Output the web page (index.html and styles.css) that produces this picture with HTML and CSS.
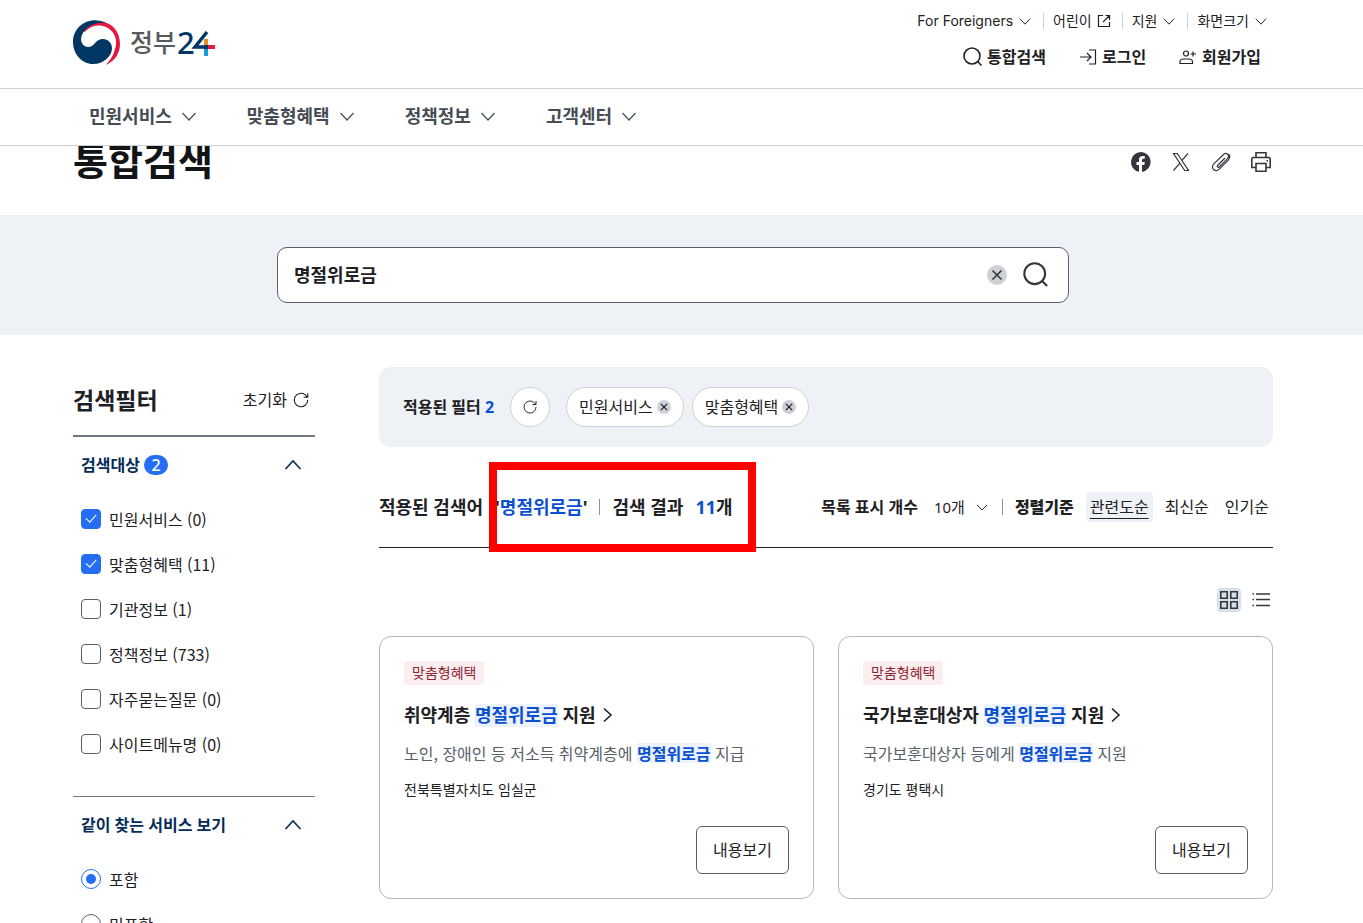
FILE: index.html
```html
<!DOCTYPE html>
<html lang="ko">
<head>
<meta charset="utf-8">
<title>통합검색 | 정부24</title>
<link rel="stylesheet" href="styles.css">
</head>
<body>
<svg class="sprite" aria-hidden="true">
  <symbol id="i-down" viewBox="0 0 20 20"><path d="M3.5 7l6.5 7L16.5 7"/></symbol>
  <symbol id="i-up" viewBox="0 0 20 20"><path d="M2.5 14L10 6l7.500 8"/></symbol>
  <symbol id="i-right" viewBox="0 0 20 20"><path d="M6 3.500l7 6.500-7 6.500"/></symbol>
  <symbol id="i-search" viewBox="0 0 20 20"><circle cx="9" cy="9" r="8"/><path d="M14.500 14.500l4 4"/></symbol>
  <symbol id="i-out" viewBox="0 0 16 16"><path d="M7 2.500H2.500v11h11V9M9.500 2.500h4V7M13.500 2.500L7 9"/></symbol>
  <symbol id="i-login" viewBox="0 0 20 20"><path d="M11 3h6.500v14H11M2 10h10.500M9 6l4 4-4 4"/></symbol>
  <symbol id="i-join" viewBox="0 0 20 20"><circle cx="8" cy="6.500" r="2.500"/><path d="M2 16.500v-1.500c0-2 1.500-3 3.500-3h5.500c2 0 3.500 1 3.500 3v1.500zM15 4.500v5M12.500 7h5.500"/></symbol>
  <symbol id="i-reset" viewBox="0 0 20 20"><path d="M17.500 10A7.500 7.500 0 1 1 14.500 4L17.200 6.700M17.500 2.500v4.500H13"/></symbol>
  <symbol id="i-close" viewBox="0 0 20 20"><circle cx="10" cy="10" r="10" fill="#cdd1d5" stroke="none"/><path d="M5.500 5.500l9 9M14.500 5.500l-9 9"/></symbol>
  <symbol id="i-facebook" viewBox="0 0 24 24"><path fill="currentColor" stroke="none" d="M12 2a10 10 0 0 0-2 19.800V15H7.500v-3H10V9.800C10 7.200 11.500 6 13.800 6c.8 0 1.500.1 2 .2v2.500h-1.300c-1 0-1.500.5-1.500 1.500V12h2.800l-.5 3H13v6.900A10 10 0 0 0 12 2z"/></symbol>
  <symbol id="i-x" viewBox="0 0 24 24"><path d="M4.500 3.500h3.800l11.200 17h-3.800zM19 3.500l-6.500 7.300M11 13.200l-6.500 7.300"/></symbol>
  <symbol id="i-clip" viewBox="0 0 24 24"><path d="M16 8l-7.500 7.500c-1 1.200.6 2.500 1.700 1.500l8.300-8.300c3-3.300-1-7-4.200-4L4.800 13.800c-4 4.200 1.500 9.200 5.500 5.300l9-9c2.500-3 1.500-5 0-6.200"/></symbol>
  <symbol id="i-print" viewBox="0 0 24 24"><path d="M7 7.500V2.800h10v4.700M7 17.500H2.800v-9l1-1h16.400l1 1v9H17M7 13.500h10v7.700H7zM17.500 10.800h1.500"/></symbol>
  <symbol id="i-grid" viewBox="0 0 24 24"><path d="M3.800 3.800h6.400v6.400H3.800zM13.800 3.800h6.400v6.400h-6.400zM3.800 13.800h6.400v6.400H3.800zM13.800 13.800h6.400v6.400h-6.400z"/></symbol>
  <symbol id="i-list" viewBox="0 0 24 24"><path d="M7 6h14M7 11.500h14M7 17.500h14M3.500 6h1.500M3.500 11.500h1.500M3.500 17.500h1.500"/></symbol>
</svg>

<header class="header">
  <div class="header-top wrap">
    <a class="logo" href="#" aria-label="정부24">
      <svg width="150" height="50" viewBox="0 0 150 50">
        <path fill="#e4173e" d="M8 11C20-4 47 1 47 25c0 9-5 17-14 21 5-6 8-13 7-20z"/>
        <path fill="#fff" d="M9 20C11 8 24 4 33 8c9 4 12 14 9 22-2 8-6 13-11 16L10 34z"/>
        <path fill="#003764" d="M33 4C18-4 0 6 0 23c0 12 9 22 20 22 11 0 19-8 19-16 0-5-4-9-9-9-8 0-8 8-15 8-4 0-7-4-7-8C9 9 21 2 33 4z"/>
        <text class="logo-ko" x="57" y="33">정부</text>
        <text class="logo-num" x="104" y="35">24</text>
        <path fill="#fff" d="M121 9h18v29h-18z"/>
        <path stroke="#003764" stroke-width="3.500" fill="none" d="M134 13l-12 15h9"/>
        <path fill="#f08a24" d="M131 20h4v7h-4z"/>
        <path fill="#003764" d="M131 26h4v4h-4z"/>
        <path fill="#e4173e" d="M135 26h7v4h-7z"/>
        <path fill="#1a9ad6" d="M131 30h4v7h-4z"/>
      </svg>
    </a>
    <div class="utils">
      <div class="util-row">
        <button class="util util-en">For Foreigners<svg class="ic s16"><use href="#i-down"/></svg></button>
        <a class="util" href="#">어린이<svg class="ic s16"><use href="#i-out"/></svg></a>
        <button class="util">지원<svg class="ic s16"><use href="#i-down"/></svg></button>
        <button class="util">화면크기<svg class="ic s16"><use href="#i-down"/></svg></button>
      </div>
      <div class="member-row">
        <a class="member" href="#"><svg class="ic s20 bold"><use href="#i-search"/></svg>통합검색</a>
        <a class="member" href="#"><svg class="ic s20"><use href="#i-login"/></svg>로그인</a>
        <a class="member" href="#"><svg class="ic s20"><use href="#i-join"/></svg>회원가입</a>
      </div>
    </div>
  </div>
  <nav class="gnb">
    <div class="gnb-list wrap">
      <button class="gnb-item">민원서비스<svg class="ic s20"><use href="#i-down"/></svg></button>
      <button class="gnb-item">맞춤형혜택<svg class="ic s20"><use href="#i-down"/></svg></button>
      <button class="gnb-item">정책정보<svg class="ic s20"><use href="#i-down"/></svg></button>
      <button class="gnb-item">고객센터<svg class="ic s20"><use href="#i-down"/></svg></button>
    </div>
  </nav>
</header>

<main>
  <div class="page-head wrap">
    <h1>통합검색</h1>
    <div class="share">
      <button aria-label="페이스북"><svg class="ic s24"><use href="#i-facebook"/></svg></button>
      <button aria-label="엑스"><svg class="ic s24"><use href="#i-x"/></svg></button>
      <button aria-label="주소 복사"><svg class="ic s24"><use href="#i-clip"/></svg></button>
      <button aria-label="인쇄"><svg class="ic s24 bold"><use href="#i-print"/></svg></button>
    </div>
  </div>

  <div class="search-band">
    <div class="wrap">
      <form class="search-box">
        <input type="text" value="명절위로금" aria-label="검색어">
        <button type="button" aria-label="지우기"><svg class="ic s20 bold"><use href="#i-close"/></svg></button>
        <button type="button" aria-label="검색"><svg class="ic s26 bold"><use href="#i-search"/></svg></button>
      </form>
    </div>
  </div>

  <div class="columns wrap">
    <aside class="filter">
      <div class="filter-head">
        <h2>검색필터</h2>
        <button class="reset">초기화<svg class="ic s18"><use href="#i-reset"/></svg></button>
      </div>
      <section class="group">
        <button class="group-head"><span>검색대상 <span class="count">2</span></span><svg class="ic s20 bold"><use href="#i-up"/></svg></button>
        <div class="options">
          <label class="option"><input type="checkbox" checked>민원서비스 (0)</label>
          <label class="option"><input type="checkbox" checked>맞춤형혜택 (11)</label>
          <label class="option"><input type="checkbox">기관정보 (1)</label>
          <label class="option"><input type="checkbox">정책정보 (733)</label>
          <label class="option"><input type="checkbox">자주묻는질문 (0)</label>
          <label class="option"><input type="checkbox">사이트메뉴명 (0)</label>
        </div>
      </section>
      <section class="group">
        <button class="group-head">같이 찾는 서비스 보기<svg class="ic s20 bold"><use href="#i-up"/></svg></button>
        <div class="options">
          <label class="option"><input type="radio" name="related" checked>포함</label>
          <label class="option"><input type="radio" name="related">미포함</label>
        </div>
      </section>
    </aside>

    <div class="content">
      <div class="applied">
        <strong>적용된 필터 <em>2</em></strong>
        <button class="round" aria-label="필터 초기화"><svg class="ic s16"><use href="#i-reset"/></svg></button>
        <div class="chips">
          <button class="chip">민원서비스<svg class="ic s14"><use href="#i-close"/></svg></button>
          <button class="chip">맞춤형혜택<svg class="ic s14"><use href="#i-close"/></svg></button>
        </div>
      </div>

      <div class="result-bar">
        <div class="summary">
          <span>적용된 검색어</span>
          <span class="keyword">'<em>명절위로금</em>'</span>
          <i class="rule"></i>
          <span>검색 결과</span>
          <span><em>11</em>개</span>
        </div>
        <div class="sorting">
          <label for="size">목록 표시 개수</label>
          <select id="size"><option>10개</option></select>
          <i class="rule"></i>
          <strong>정렬기준</strong>
          <div class="sorts">
            <button class="sort on">관련도순</button>
            <button class="sort">최신순</button>
            <button class="sort">인기순</button>
          </div>
        </div>
        <div class="highlight"></div>
      </div>

      <div class="views">
        <button class="view on" aria-label="카드형"><svg class="ic s24 bold"><use href="#i-grid"/></svg></button>
        <button class="view" aria-label="목록형"><svg class="ic s24 bold"><use href="#i-list"/></svg></button>
      </div>

      <div class="cards">
        <article class="card">
          <span class="badge">맞춤형혜택</span>
          <h3><a href="#">취약계층 <mark>명절위로금</mark> 지원<svg class="ic s20 bold"><use href="#i-right"/></svg></a></h3>
          <p class="desc">노인, 장애인 등 저소득 취약계층에 <mark>명절위로금</mark> 지급</p>
          <p class="region">전북특별자치도 임실군</p>
          <button class="more">내용보기</button>
        </article>
        <article class="card">
          <span class="badge">맞춤형혜택</span>
          <h3><a href="#">국가보훈대상자 <mark>명절위로금</mark> 지원<svg class="ic s20 bold"><use href="#i-right"/></svg></a></h3>
          <p class="desc">국가보훈대상자 등에게 <mark>명절위로금</mark> 지원</p>
          <p class="region">경기도 평택시</p>
          <button class="more">내용보기</button>
        </article>
      </div>
    </div>
  </div>
</main>
</body>
</html>
```
FILE: styles.css
```css
* { box-sizing: border-box; margin: 0; padding: 0; }
html { overflow: hidden; height: 100%; }
body {
  height: 100%;
  overflow: hidden;
  background: #fff;
  color: #1e2124;
  font: 400 16px/24px "Noto Sans", "Noto Sans CJK KR", sans-serif;
}
button, input, select { font: inherit; color: inherit; background: none; border: 0; }
button { display: inline-flex; align-items: center; justify-content: center; white-space: nowrap; }
a { color: inherit; text-decoration: none; }
em { font-style: normal; color: #0b50d0; }
.sprite { display: none; }

.ic { flex: none; fill: none; stroke: currentColor; stroke-width: 1.2; }
.ic.bold { stroke-width: 1.6; }
.s14 { width: 14px; height: 14px; stroke-width: 1.8; }
.s16 { width: 16px; height: 16px; }
.s18 { width: 18px; height: 18px; }
.s20 { width: 20px; height: 20px; }
.s24 { width: 24px; height: 24px; }
.s26 { width: 26px; height: 26px; }

.wrap { margin: 0 90px 0 73px; }

/* header */
.header { position: relative; z-index: 2; background: #fff; }
.header-top { display: flex; justify-content: space-between; height: 88px; }
.logo { padding-top: 19px; }
.logo svg { display: block; }
.logo-ko { font: 500 25px "Noto Sans CJK KR", sans-serif; fill: #58595b; }
.logo-num { font: 500 31px "Noto Sans", sans-serif; fill: #003764; }
.utils { display: flex; flex-direction: column; gap: 12px; padding-top: 9px; }
.util-row { display: flex; justify-content: flex-end; align-items: center; padding-right: 4px; font-size: 14px; }
.util { display: inline-flex; align-items: center; gap: 4px; height: 24px; font-size: 14px; }
.util-en { font-family: Inter, sans-serif; }
.util + .util { margin-left: 10px; padding-left: 10px; position: relative; }
.util + .util::before { content: ""; position: absolute; left: 0; top: 4px; height: 16px; border-left: 1px solid #cdd1d5; }
.member-row { display: flex; gap: 32px; justify-content: flex-end; padding-right: 12px; font-weight: 700; }
.member { display: flex; align-items: center; gap: 4px; }
.gnb { border-top: 1px solid #cdd1d5; border-bottom: 1px solid #cdd1d5; }
.gnb-list { display: flex; gap: 16px; }
.gnb-item { gap: 7px; height: 56px; padding: 0 16px 3px; font-size: 18px; font-weight: 700; color: #464c53; }

/* title */
.page-head { display: flex; justify-content: space-between; align-items: center; height: 106px; margin-top: -37px; }
h1 { padding-bottom: 4px; font-size: 38px; line-height: 48px; font-weight: 700; color: #131416; }
.share { display: flex; gap: 16px; color: #33363d; }

.search-band { padding: 32px 0; background: #eef1f6; }
.search-box {
  display: flex; align-items: center; gap: 16px;
  max-width: 792px; height: 56px; margin: 0 auto; padding: 0 19px 0 16px;
  background: #fff; border: 1px solid #58616a; border-radius: 10px; color: #33363d;
}
.search-box input { flex: 1; min-width: 0; font-size: 18px; font-weight: 700; color: #1e2124; outline: 0; }

/* filter column */
.columns { display: grid; grid-template-columns: 242px 1fr; gap: 64px; padding-top: 32px; }
.filter-head { display: flex; align-items: center; justify-content: space-between; height: 70px; padding: 0 5px 2px 0; border-bottom: 2px solid #6d7882; }
h2 { font-size: 23px; line-height: 32px; font-weight: 700; }
.reset { gap: 5px; }
.group + .group { border-top: 1px solid #6d7882; }
.group-head { display: flex; justify-content: space-between; width: 100%; height: 56px; padding: 0 12px 0 8px; font-weight: 700; color: #052b57; }
.count { display: inline-block; width: 24px; height: 20px; line-height: 20px; border-radius: 10px; background: #256ef4; color: #fff; font-weight: 500; text-align: center; }
.options { padding: 3px 8px 30px; }
.option { display: flex; align-items: center; gap: 8px; height: 45px; font-family: "Noto Sans CJK KR", sans-serif; line-height: 20px; }
.option input { appearance: none; display: grid; place-items: center; width: 20px; height: 20px; border: 1px solid #58616a; border-radius: 4px; background: #fff; }
.option input[type="radio"] { border-radius: 50%; }
.option input:checked { border-color: #256ef4; }
.option input[type="checkbox"]:checked { background: #256ef4; }
.option input[type="checkbox"]:checked::before { content: ""; width: 5px; height: 9px; margin-bottom: 3px; border: solid #fff; border-width: 0 1px 1px 0; transform: rotate(42deg); }
.option input[type="radio"]:checked::before { content: ""; width: 10px; height: 10px; border-radius: 50%; background: #256ef4; }

/* applied filters */
.content { min-width: 0; }
.applied { display: flex; align-items: center; gap: 16px; height: 80px; padding: 0 24px; border-radius: 12px; background: #eef1f6; }
.round, .chip { height: 40px; border: 1px solid #cdd1d5; border-radius: 20px; background: #fff; }
.round { width: 40px; }
.chips { display: flex; gap: 8px; }
.chip { gap: 4px; padding: 0 12px; }

/* result bar */
.result-bar { position: relative; display: flex; align-items: center; justify-content: space-between; height: 101px; padding-top: 20px; border-bottom: 1px solid #1e2124; font-weight: 700; }
.summary, .sorting { display: flex; align-items: center; gap: 12px; white-space: nowrap; }
.summary { font-size: 18px; }
.rule { height: 16px; border-left: 1px solid #8a949e; }
.sorting select { width: 56px; font-size: 15px; font-weight: 400; appearance: none; margin-left: 4px; background: url("data:image/svg+xml,%3Csvg xmlns='http://www.w3.org/2000/svg' width='16' height='16' fill='none' stroke='%2333363d'%3E%3Cpath d='M3 6l5 5 5-5'/%3E%3C/svg%3E") no-repeat right center; }
.sorts { display: flex; gap: 8px; font-weight: 400; }
.sort { height: 30px; padding: 0 4px; border-radius: 4px; }
.sort.on { background: #eef1f6; text-decoration: underline; text-underline-offset: 5px; }
.highlight { position: absolute; left: 110px; top: 15px; width: 267px; height: 90px; border: 8px solid #f00; }

.views { display: flex; justify-content: flex-end; gap: 8px; padding: 40px 0 24px; color: #33363d; }
.view { border-radius: 4px; }
.view.on { background: #d6e0eb; }

/* cards */
.cards { display: grid; grid-template-columns: 1fr 1fr; gap: 24px; }
.card { display: flex; flex-direction: column; align-items: flex-start; padding: 24px; border: 1px solid #b1b8be; border-radius: 12px; }
.badge { padding: 0 8px; border-radius: 4px; background: #fceeee; color: #8f2636; font-size: 14px; line-height: 24px; }
h3 { margin-top: 16px; font-size: 18px; line-height: 28px; font-weight: 700; }
h3 a { display: inline-flex; align-items: center; white-space: pre; }
h3 .ic { margin-left: 2px; }
mark { display: inline-block; background: #ecf2fe; color: #0b50d0; font-weight: 700; line-height: 20px; }
h3 mark { line-height: 23px; }
.desc, .region { font-family: "Noto Sans CJK KR", sans-serif; }
.desc { margin-top: 12px; color: #58616a; }
.region { margin-top: 12px; font-size: 14px; }
.more { align-self: flex-end; height: 48px; margin-top: 25px; padding: 0 16px; border: 1px solid #58616a; border-radius: 6px; }
```
